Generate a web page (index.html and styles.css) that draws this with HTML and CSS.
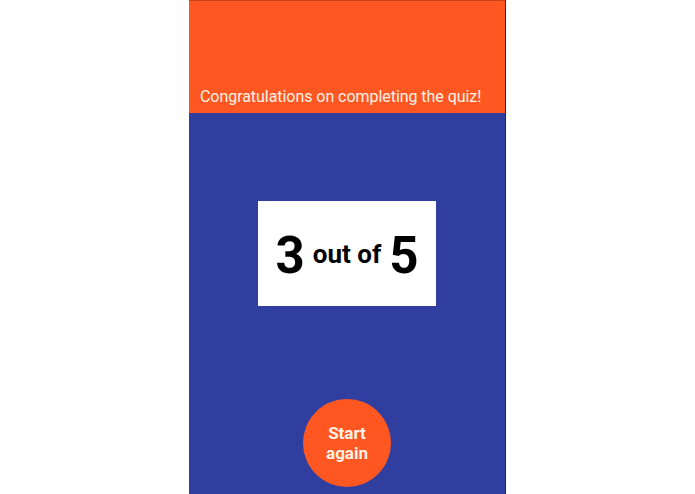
FILE: index.html
```html
<!DOCTYPE html>
<html>
<head>
<meta charset="utf-8">
<link rel="stylesheet" href="styles.css">
</head>
<body>
<div class="phone">
  <header class="header">
    <p class="title">Congratulations on completing the quiz!</p>
  </header>
  <main class="content">
    <div class="score">
      <span class="num">3</span>
      <span class="mid">out of</span>
      <span class="num">5</span>
    </div>
    <button class="again">Start<br>again</button>
  </main>
</div>
</body>
</html>
```
FILE: styles.css
```css
html, body {
  margin: 0;
  padding: 0;
  height: 100%;
  background: #ffffff;
  overflow: hidden;
}
body {
  display: flex;
  justify-content: center;
  font-family: Roboto, "Liberation Sans", sans-serif;
}
.phone {
  width: 316px;
  height: 494px;
  display: flex;
  flex-direction: column;
  border-right: 1px solid #3a2418;
}
.header {
  height: 113px;
  background: #ff5722;
  border-top: 1px solid #c8431a;
  box-sizing: border-box;
  display: flex;
  flex-direction: column;
  justify-content: flex-end;
  padding: 0 0 7px 11px;
}
.title {
  margin: 0;
  font-size: 16px;
  line-height: 19px;
  letter-spacing: -0.05px;
  color: #fff3e6;
}
.content {
  flex: 1;
  background: #303f9f;
  display: flex;
  flex-direction: column;
  align-items: center;
  padding-top: 88px;
}
.score {
  width: 178px;
  height: 105px;
  background: #ffffff;
  display: flex;
  align-items: center;
  justify-content: center;
  gap: 8px;
  color: #000;
  font-weight: 700;
}
.num {
  font-size: 51px;
  margin-top: 4px;
}
.mid {
  font-size: 26px;
}
.again {
  margin-top: 93px;
  width: 88px;
  height: 88px;
  flex: none;
  border: none;
  border-radius: 50%;
  background: #ff5722;
  color: #fff3e6;
  font-family: Roboto, "Liberation Sans", sans-serif;
  font-weight: 700;
  font-size: 17px;
  line-height: 20px;
  padding: 0;
}
```
